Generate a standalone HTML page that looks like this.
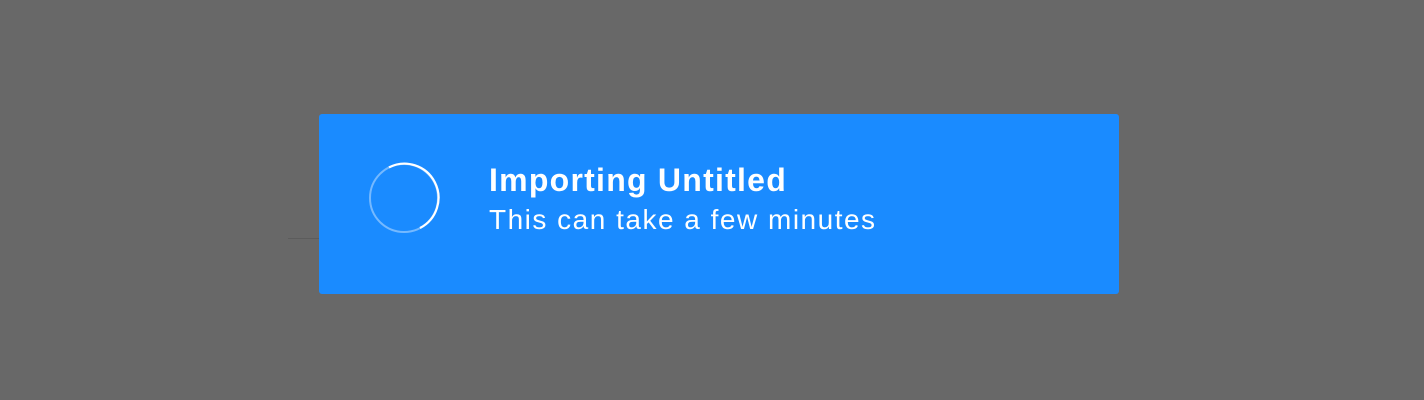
<!DOCTYPE html>
<html><head><style>
html,body{margin:0;padding:0;width:1424px;height:400px;background:#686868;overflow:hidden;font-family:"Liberation Sans",sans-serif}
.line{position:absolute;left:288px;top:238px;width:31px;height:1px;background:#5c5c5c}
.box{position:absolute;left:319px;top:114px;width:800px;height:180px;background:#1a8bff;border-radius:3px}
svg{position:absolute;left:368px;top:162px}
.t{position:absolute;left:489px;top:162px;color:#fff;font-weight:bold;font-size:32px;white-space:nowrap;letter-spacing:1.25px}
.s{position:absolute;left:489px;top:204px;color:#fff;font-size:28px;white-space:nowrap;letter-spacing:1.5px}
</style></head><body>
<div class="line"></div>
<div class="box"></div>
<svg width="72" height="72" viewBox="0 0 72 72">
<circle cx="36" cy="36" r="34" fill="none" stroke="rgba(255,255,255,0.4)" stroke-width="2"/>
<path d="M 21 5.4 A 34 34 0 0 1 52 66" fill="none" stroke="#fff" stroke-width="2.2"/>
</svg>
<div class="t">Importing Untitled</div>
<div class="s">This can take a few minutes</div>
</body></html>
